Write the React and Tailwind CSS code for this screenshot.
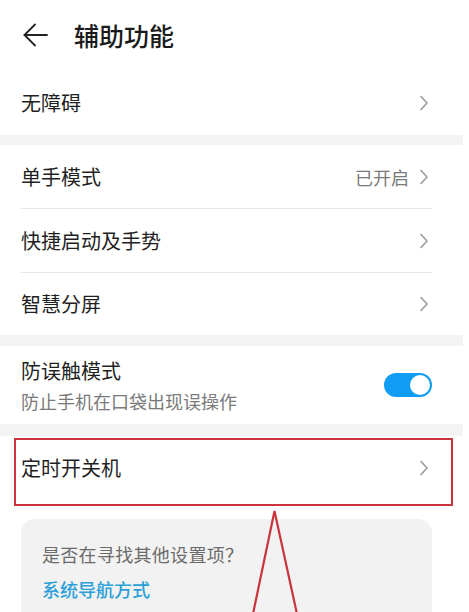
import React from 'react';

const font = { fontFamily: '"Noto Sans CJK SC", "Noto Sans", sans-serif' };

const Chevron = () => (
  <svg width="10" height="16" viewBox="0 0 10 16" fill="none" className="shrink-0">
    <path d="M2 1.5 L8 8 L2 14.5" stroke="#9a9a9a" strokeWidth="1.6" strokeLinecap="round" strokeLinejoin="round" />
  </svg>
);

const Row = ({ label, value, h = 'h-[63px]', extra = '', divider }) => (
  <div className="bg-white">
    <div className={`flex items-center justify-between pl-[21px] pr-[34px] ${h} ${extra}`}>
      <span className="text-[20px] text-[#1f1f1f] leading-none">{label}</span>
      <div className="flex items-center gap-[10px]">
        {value && <span className="text-[18px] text-[#7a7a7a] leading-none">{value}</span>}
        <Chevron />
      </div>
    </div>
    {divider && <div className="ml-[21px] mr-[31px] h-px bg-[#e6e6e6]" />}
  </div>
);

const Band = ({ h }) => <div className={`bg-[#f3f3f3] ${h}`} />;

export default function App() {
  return (
    <div className="relative w-[469px] h-[612px] overflow-hidden bg-white" style={font}>
      <div className="w-[463px]">
        {/* header */}
        <div className="flex items-center h-[70px] pl-[23px]">
          <svg width="25" height="24" viewBox="0 0 25 24" fill="none">
            <path d="M1.5 12 H24" stroke="#222" strokeWidth="1.8" strokeLinecap="round" />
            <path d="M12 1.5 L1.5 12 L12 22.5" stroke="#222" strokeWidth="1.8" strokeLinecap="round" strokeLinejoin="round" />
          </svg>
          <span className="ml-[26px] text-[25px] font-medium text-[#1a1a1a] leading-none">辅助功能</span>
        </div>

        <Row label="无障碍" h="h-[65px]" />
        <Band h="h-[10px]" />

        <Row label="单手模式" value="已开启" divider />
        <Row label="快捷启动及手势" divider />
        <Row label="智慧分屏" h="h-[62px]" />
        <Band h="h-[11px]" />

        <div className="bg-white flex items-center justify-between pl-[21px] pr-[31px] h-[78px]">
          <div className="flex flex-col gap-[9px]">
            <span className="text-[20px] text-[#1f1f1f] leading-[22px]">防误触模式</span>
            <span className="text-[18px] text-[#7a7a7a] leading-[20px]">防止手机在口袋出现误操作</span>
          </div>
          <div className="w-[48px] h-[24px] rounded-full bg-[#0f9cf2] flex items-center justify-end pr-[2px]">
            <div className="w-[20px] h-[20px] rounded-full bg-white" />
          </div>
        </div>
        <Band h="h-[12px]" />

        <div className="relative">
          <Row label="定时开关机" h="h-[70px]" extra="pb-[6px]" />
          <div className="absolute left-[14px] top-[2px] w-[439px] h-[68px] border-2 border-[#c9343d]" />
        </div>

        <div className="pt-[13px] px-[21px]">
          <div className="w-[411px] h-[120px] rounded-[14px] bg-[#f2f2f2] pl-[21px] pt-[22px]">
            <div className="text-[18px] text-[#6b6b6b] leading-[26px] tracking-[0.3px]">是否在寻找其他设置项？</div>
            <div className="mt-[9px] text-[18px] font-medium text-[#2a9fd8] leading-[26px]">系统导航方式</div>
          </div>
        </div>
      </div>

      <svg className="absolute left-0 top-0 pointer-events-none" width="469" height="612" viewBox="0 0 469 612" fill="none">
        <path d="M253 614 L274.5 511 L297 614" stroke="#c9343d" strokeWidth="2.2" strokeLinejoin="miter" />
      </svg>
    </div>
  );
}
